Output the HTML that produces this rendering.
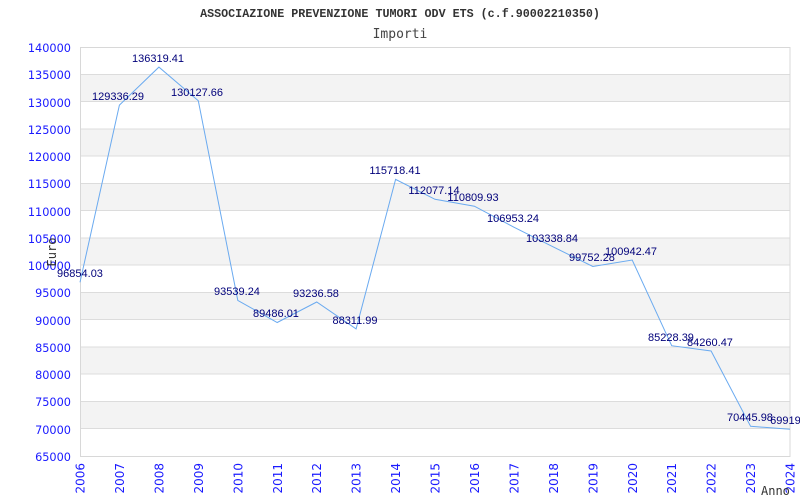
<!DOCTYPE html>
<html><head><meta charset="utf-8"><style>body{margin:0;background:#fff}svg{display:block}</style></head>
<body>
<svg width="800" height="500" xmlns="http://www.w3.org/2000/svg">
<rect width="800" height="500" fill="#fff"/>
<g fill="#f3f3f3">
<rect x="80" y="74.3" width="710" height="27.3"/>
<rect x="80" y="128.8" width="710" height="27.3"/>
<rect x="80" y="183.4" width="710" height="27.3"/>
<rect x="80" y="237.9" width="710" height="27.3"/>
<rect x="80" y="292.4" width="710" height="27.3"/>
<rect x="80" y="347" width="710" height="27.3"/>
<rect x="80" y="401.5" width="710" height="27.3"/>
</g>
<g stroke="#dcdcdc" stroke-width="1">
<line x1="80" y1="74.5" x2="790" y2="74.5"/><line x1="80" y1="101.5" x2="790" y2="101.5"/>
<line x1="80" y1="129" x2="790" y2="129"/><line x1="80" y1="156" x2="790" y2="156"/>
<line x1="80" y1="183.5" x2="790" y2="183.5"/><line x1="80" y1="210.5" x2="790" y2="210.5"/>
<line x1="80" y1="238" x2="790" y2="238"/><line x1="80" y1="265" x2="790" y2="265"/>
<line x1="80" y1="292.5" x2="790" y2="292.5"/><line x1="80" y1="319.5" x2="790" y2="319.5"/>
<line x1="80" y1="347" x2="790" y2="347"/><line x1="80" y1="374" x2="790" y2="374"/>
<line x1="80" y1="401.5" x2="790" y2="401.5"/><line x1="80" y1="428.5" x2="790" y2="428.5"/>
</g>
<rect x="80.5" y="47.5" width="709.5" height="409" fill="none" stroke="#d8d8d8"/>
<text x="400" y="17" text-anchor="middle" font-family="Liberation Mono,monospace" font-weight="bold" font-size="11.7" fill="#333">ASSOCIAZIONE PREVENZIONE TUMORI ODV ETS (c.f.90002210350)</text>
<text x="400" y="38" text-anchor="middle" font-family="DejaVu Sans Mono,monospace" font-size="13" fill="#444">Importi</text>
<g font-family="DejaVu Sans,sans-serif" font-size="11.3" fill="#1a1aff" text-anchor="end">
<text x="71" y="52">140000</text><text x="71" y="79">135000</text><text x="71" y="107">130000</text>
<text x="71" y="134">125000</text><text x="71" y="161">120000</text><text x="71" y="188">115000</text>
<text x="71" y="216">110000</text><text x="71" y="243">105000</text><text x="71" y="270">100000</text>
<text x="71" y="297">95000</text><text x="71" y="325">90000</text><text x="71" y="352">85000</text>
<text x="71" y="379">80000</text><text x="71" y="406">75000</text><text x="71" y="434">70000</text>
<text x="71" y="461">65000</text>
</g>
<g font-family="DejaVu Sans,sans-serif" font-size="12" fill="#1a1aff" text-anchor="end">
<text transform="translate(84.5,463) rotate(-90)">2006</text>
<text transform="translate(124,463) rotate(-90)">2007</text>
<text transform="translate(163.5,463) rotate(-90)">2008</text>
<text transform="translate(203,463) rotate(-90)">2009</text>
<text transform="translate(242.5,463) rotate(-90)">2010</text>
<text transform="translate(282,463) rotate(-90)">2011</text>
<text transform="translate(321,463) rotate(-90)">2012</text>
<text transform="translate(360.5,463) rotate(-90)">2013</text>
<text transform="translate(400,463) rotate(-90)">2014</text>
<text transform="translate(439.5,463) rotate(-90)">2015</text>
<text transform="translate(479,463) rotate(-90)">2016</text>
<text transform="translate(518.5,463) rotate(-90)">2017</text>
<text transform="translate(558,463) rotate(-90)">2018</text>
<text transform="translate(597.5,463) rotate(-90)">2019</text>
<text transform="translate(637,463) rotate(-90)">2020</text>
<text transform="translate(676,463) rotate(-90)">2021</text>
<text transform="translate(715.5,463) rotate(-90)">2022</text>
<text transform="translate(755,463) rotate(-90)">2023</text>
<text transform="translate(794.5,463) rotate(-90)">2024</text>
</g>
<text transform="translate(56,252) rotate(-90)" text-anchor="middle" font-family="DejaVu Sans Mono,monospace" font-size="12" fill="#333">Euro</text>
<text x="761" y="495" font-family="DejaVu Sans Mono,monospace" font-size="12" fill="#333">Anno</text>
<polyline fill="none" stroke="#6aaaf0" stroke-width="1" points="80,282.3 119.4,105.1 158.9,67.1 198.3,100.8 237.8,300.4 277.2,322.5 316.7,302 356.1,328.9 395.6,179.4 435,199.3 474.4,206.2 513.9,227.2 553.3,246.9 592.8,266.5 632.2,260 671.7,345.7 711.1,351 750.6,426.3 790,429.2"/>
<g font-family="Liberation Sans,sans-serif" font-size="11" fill="#00007a" text-anchor="middle">
<text x="80" y="277">96854.03</text>
<text x="118" y="100">129336.29</text>
<text x="158" y="62">136319.41</text>
<text x="197" y="96">130127.66</text>
<text x="237" y="295">93539.24</text>
<text x="276" y="317">89486.01</text>
<text x="316" y="297">93236.58</text>
<text x="355" y="324">88311.99</text>
<text x="395" y="174">115718.41</text>
<text x="434" y="194">112077.14</text>
<text x="473" y="201">110809.93</text>
<text x="513" y="222">106953.24</text>
<text x="552" y="242">103338.84</text>
<text x="592" y="261">99752.28</text>
<text x="631" y="255">100942.47</text>
<text x="671" y="341">85228.39</text>
<text x="710" y="346">84260.47</text>
<text x="750" y="421">70445.98</text>
<text x="787" y="424">69919.</text>
</g>
</svg>
</body></html>
